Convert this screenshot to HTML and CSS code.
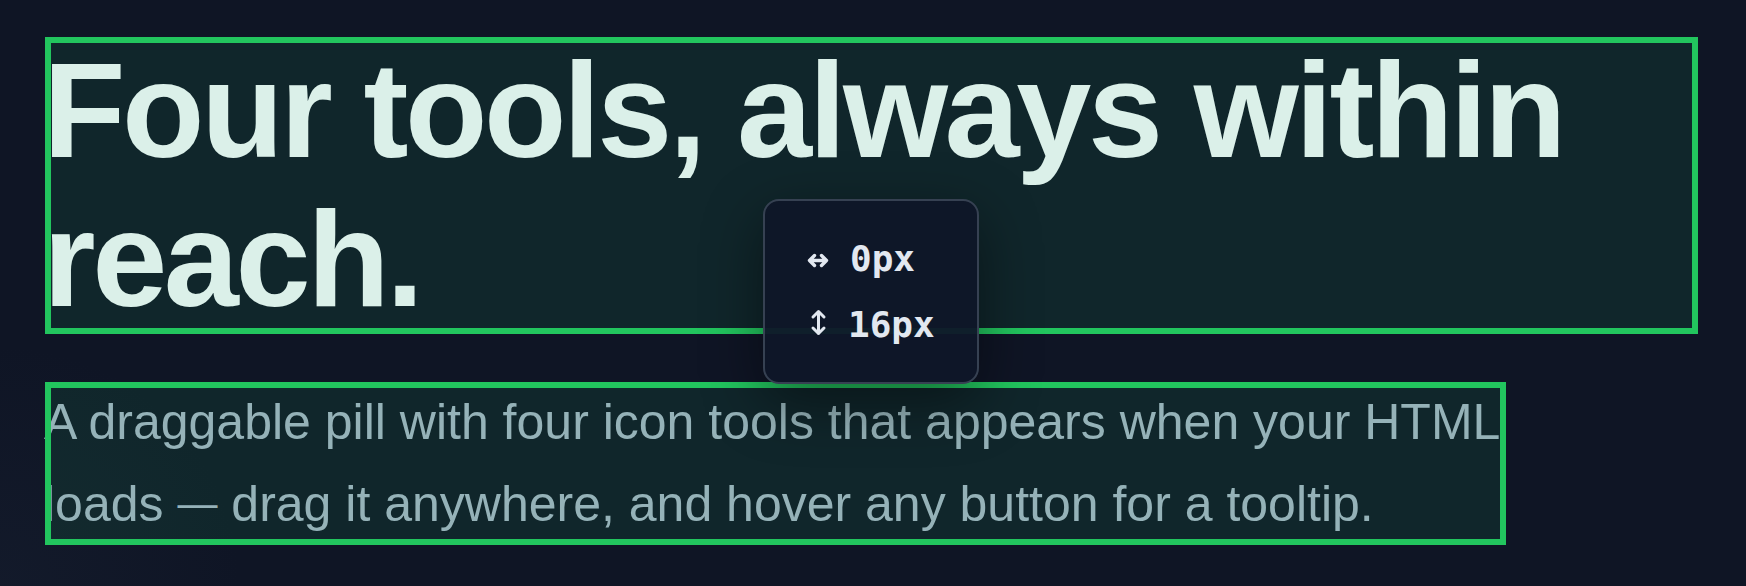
FILE: index.html
```html
<!DOCTYPE html>
<html lang="en">
<head>
<meta charset="utf-8">
<title>Four tools</title>
<link rel="stylesheet" href="styles.css">
</head>
<body>
<main class="page">
  <h1 class="title hl">Four tools, always within reach.</h1>
  <p class="lede hl">A draggable pill with four icon tools that appears when your HTML<br>loads <span class="dash">—</span> drag it anywhere, and hover any button for a tooltip.</p>
</main>
<div class="measure">
  <div class="measure-row">
    <svg class="measure-icon icon-h" width="22" height="15" viewBox="0 0 22 15" aria-hidden="true"><path d="M2.5 7.5h17M7.5 2.5l-5 5 5 5M14.5 2.5l5 5-5 5"/></svg>
    <span class="measure-val">0px</span>
  </div>
  <div class="measure-row">
    <svg class="measure-icon icon-v" width="19" height="27" viewBox="0 0 19 27" aria-hidden="true"><path d="M9.5 2.5v22M4 8l5.5-5.5L15 8M4 19l5.5 5.5L15 19"/></svg>
    <span class="measure-val">16px</span>
  </div>
</div>
</body>
</html>
```
FILE: styles.css
```css
html, body {
  margin: 0;
  padding: 0;
}

body {
  position: relative;
  width: 1746px;
  height: 586px;
  overflow: hidden;
  background:
    radial-gradient(circle at 0% 100%, rgba(30, 41, 59, 0.25), rgba(30, 41, 59, 0) 240px),
    #0f1525;
  font-family: "Liberation Sans", Arial, sans-serif;
}

.page {
  display: flex;
  flex-direction: column;
  align-items: flex-start;
  gap: 48px;
  padding: 37px 48px 0 43px;
}

.hl {
  position: relative;
  margin: 0;
}

.hl::after {
  content: "";
  position: absolute;
  top: 0;
  right: 0;
  bottom: 0;
  left: 2px;
  border: 6px solid #22c55e;
  background: rgba(34, 197, 94, 0.1);
  pointer-events: none;
}

.title {
  align-self: stretch;
  font-size: 135px;
  line-height: 148.5px;
  font-weight: 700;
  letter-spacing: -3.4px;
  color: #f1f5f9;
}

.lede {
  width: 1462px;
  margin-left: 1px;
  font-size: 50px;
  line-height: 81px;
  font-weight: 400;
  white-space: nowrap;
  color: #a3b0c2;
}

.lede::after {
  left: 1px;
}

.dash {
  font-size: 40px;
  vertical-align: 4px;
}

.measure {
  position: absolute;
  left: 763px;
  top: 199px;
  display: flex;
  flex-direction: column;
  gap: 23px;
  padding: 36px 42px;
  border: 2px solid #364152;
  border-radius: 16px;
  background: rgba(15, 22, 40, 0.95);
  box-shadow: 0 18px 60px rgba(0, 0, 0, 0.45);
  font-family: "DejaVu Sans Mono", monospace;
  font-size: 36px;
  line-height: 43.2px;
  font-weight: 700;
  color: #e2e8f0;
}

.measure-row {
  display: flex;
  align-items: flex-start;
  white-space: nowrap;
}

.measure-icon {
  flex: none;
  fill: none;
  stroke: #e2e8f0;
  stroke-linecap: round;
  stroke-linejoin: round;
}

.icon-h {
  width: 22px;
  margin: 16px 21px 0 0;
  stroke-width: 3.4;
}

.icon-v {
  width: 19px;
  margin: 6px 22px 0 1.5px;
  stroke-width: 3;
}

.icon-v + .measure-val {
  margin-left: -1.5px;
}
```
